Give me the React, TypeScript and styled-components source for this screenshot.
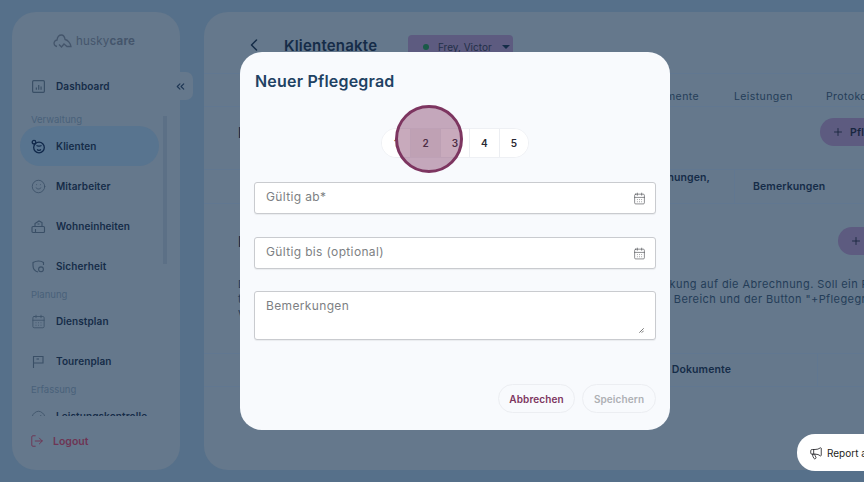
import React from 'react'
import styled, { createGlobalStyle } from 'styled-components'
import { ChevronLeft, ChevronsLeft, CalendarDays, LogOut, Plus, Megaphone, Gauge, Smile } from 'lucide-react'

const GlobalStyle = createGlobalStyle`
  html, body {
    margin: 0;
    height: 482px;
    overflow: hidden;
    background: #56708a;
    font-family: Inter, "Open Sans", sans-serif;
  }
`
const Page = styled.div`
  position: relative;
  display: flex;
  gap: 24px;
  height: 482px;
  box-sizing: border-box;
  padding: 12px 0 12px 12px;
  overflow: hidden;
`
const Sidebar = styled.aside`
  position: relative;
  flex: 0 0 168px;
  display: flex;
  flex-direction: column;
  background: #65788c;
  border-radius: 24px;
`
const Logo = styled.div`
  display: flex;
  align-items: center;
  justify-content: center;
  gap: 4px;
  height: 54px;
  box-sizing: border-box;
  padding: 4px 4px 0 0;
  color: #44556b;
  font-size: 11.5px;
  letter-spacing: 0.2px;
  b {
    font-weight: 700;
  }
`
const Collapse = styled.div`
  position: absolute;
  top: 60px;
  right: -13px;
  width: 25px;
  height: 28px;
  display: flex;
  align-items: center;
  justify-content: center;
  background: #65788c;
  border-radius: 0 7px 7px 0;
  color: #1c3553;
`
const Nav = styled.nav`
  flex: 1;
  height: 350px;
  overflow: hidden;
  padding-left: 8px;
`
const Group = styled.div<{ $h: number }>`
  height: ${(p) => p.$h}px;
  box-sizing: border-box;
  padding-left: 11px;
  display: flex;
  align-items: flex-end;
  font-size: 9.5px;
  line-height: 12px;
  color: #49617a;
`
const NavItem = styled.div<{ $active?: boolean }>`
  display: flex;
  align-items: center;
  gap: 10px;
  width: 139px;
  height: 40px;
  box-sizing: border-box;
  padding-left: 11px;
  border-radius: 20px;
  background: ${(p) => (p.$active ? '#58748f' : 'transparent')};
  color: ${(p) => (p.$active ? '#10284a' : '#3a4f66')};
  span {
    font-size: 10px;
    font-weight: 600;
    letter-spacing: 0.1px;
    color: #152c48;
    white-space: nowrap;
  }
`
const Scrollbar = styled.div`
  position: absolute;
  left: 151px;
  top: 104px;
  width: 4px;
  height: 148px;
  background: #5c7086;
`
const LogoutRow = styled.div`
  display: flex;
  align-items: center;
  gap: 9px;
  height: 54px;
  padding: 0 0 4px 18px;
  box-sizing: border-box;
  color: #6e3554;
  font-size: 10.5px;
  font-weight: 600;
`
const Main = styled.main`
  flex: 0 0 900px;
  background: #65788c;
  border-radius: 24px;
  color: #152c48;
  padding-top: 23px;
  box-sizing: border-box;
`
const Head = styled.div`
  display: flex;
  align-items: flex-start;
  height: 38px;
  padding-left: 40px;
  border-bottom: 1px solid #617790;
`
const Title = styled.h1`
  margin: 0 0 0 20px;
  font-size: 15px;
  line-height: 21px;
  font-weight: 600;
  letter-spacing: 0.2px;
  width: 124px;
`
const Patient = styled.div`
  display: flex;
  align-items: center;
  gap: 9px;
  width: 105px;
  height: 23px;
  box-sizing: border-box;
  padding-left: 15px;
  background: #5d5b80;
  border-radius: 4px;
  font-size: 10px;
  color: #222f48;
  i {
    width: 6px;
    height: 6px;
    border-radius: 50%;
    background: #1a5a48;
  }
  u {
    width: 0;
    height: 0;
    border: 4px solid transparent;
    border-top-color: #152c48;
    border-bottom: 0;
    margin-left: 1px;
  }
`
const Tabs = styled.div`
  display: grid;
  grid-template-columns: 530px 92px auto;
  height: 32px;
  align-items: end;
  border-bottom: 1px solid #617790;
  font-size: 10.5px;
  letter-spacing: 0.4px;
  color: #243d58;
`
const Tab = styled.div<{ $first?: boolean }>`
  white-space: nowrap;
  padding-bottom: 3px;
  padding-right: ${(p) => (p.$first ? '35px' : '0')};
  text-align: ${(p) => (p.$first ? 'right' : 'left')};
`
const SectionRow = styled.div<{ $left: number; $top: number }>`
  display: grid;
  grid-template-columns: ${(p) => p.$left}px auto;
  justify-content: start;
  align-items: center;
  margin-top: ${(p) => p.$top}px;
  padding-left: 34px;
  h2 {
    margin: 0;
    font-size: 14px;
    font-weight: 600;
  }
`
const AddButton = styled.div`
  display: flex;
  align-items: center;
  gap: 6px;
  height: 28px;
  padding: 0 12px;
  border-radius: 14px;
  background: #5d5b80;
  font-size: 10.5px;
  font-weight: 600;
  letter-spacing: 0.2px;
  color: #18263f;
`
const TableHead = styled.div<{ $cols: string; $top: number; $h: number }>`
  display: grid;
  grid-template-columns: ${(p) => p.$cols};
  align-items: center;
  height: ${(p) => p.$h}px;
  margin-top: ${(p) => p.$top}px;
  box-sizing: border-box;
  border-top: 1px solid #617790;
  border-bottom: 1px solid #617790;
  font-size: 10.5px;
  font-weight: 600;
  letter-spacing: 0.1px;
  color: #152c48;
`
const HeadCell = styled.div<{ $line?: boolean; $up?: boolean; $end?: number }>`
  height: 100%;
  display: flex;
  align-items: center;
  justify-content: ${(p) => (p.$end ? 'flex-end' : 'flex-start')};
  box-sizing: border-box;
  padding-left: 18px;
  padding-right: ${(p) => p.$end || 0}px;
  line-height: 13px;
  border-right: ${(p) => (p.$line ? '1px solid #617790' : 'none')};
  padding-bottom: ${(p) => (p.$up ? '18px' : '0')};
`
const Note = styled.p`
  margin: 22px 0 0 34px;
  font-size: 11px;
  line-height: 14.5px;
  letter-spacing: 0.4px;
  color: #243d58;
  white-space: nowrap;
`
const Modal = styled.section`
  position: absolute;
  left: 240px;
  top: 52px;
  width: 430px;
  height: 378px;
  box-sizing: border-box;
  padding: 0 14px;
  display: flex;
  flex-direction: column;
  background: #f8fafd;
  border-radius: 22px;
`
const ModalTitle = styled.h2`
  margin: 18px 0 0 1px;
  font-size: 16px;
  line-height: 22px;
  font-weight: 600;
  letter-spacing: 0.2px;
  color: #1f4263;
`
const Stepper = styled.div`
  align-self: center;
  display: flex;
  margin: 36px 0 24px 0;
  height: 30px;
  background: #fff;
  border: 1px solid #eef0f4;
  border-radius: 15px;
  overflow: hidden;
  box-sizing: border-box;
`
const Step = styled.div<{ $hover?: boolean }>`
  width: 28.4px;
  display: flex;
  align-items: center;
  justify-content: center;
  font-size: 10px;
  font-weight: 600;
  color: #2a2a33;
  background: ${(p) => (p.$hover ? '#f0f0f2' : '#fff')};
  & + & {
    border-left: 1px solid #eceef2;
  }
`
const Cursor = styled.div`
  position: absolute;
  left: 155px;
  top: 53px;
  width: 68px;
  height: 68px;
  box-sizing: border-box;
  border: 3px solid #7d3560;
  border-radius: 50%;
  background: rgba(125, 53, 96, 0.42);
`
const Field = styled.div<{ $h: number; $gap: number }>`
  position: relative;
  display: flex;
  justify-content: space-between;
  align-items: flex-start;
  height: ${(p) => p.$h}px;
  margin-bottom: ${(p) => p.$gap}px;
  box-sizing: border-box;
  padding: 6px 9px 0 11px;
  background: #fff;
  border: 1px solid #c9cbcf;
  border-radius: 3px;
  box-shadow: 0 1px 1px rgba(0, 0, 0, 0.06);
  font-size: 12px;
  line-height: 16px;
  letter-spacing: 0.35px;
  color: #7d7f83;
  svg {
    color: #505256;
    margin-top: 3px;
  }
`
const Grip = styled.svg`
  position: absolute;
  right: 11px;
  bottom: 6px;
`
const Actions = styled.div`
  margin-top: auto;
  margin-bottom: 17px;
  display: flex;
  justify-content: flex-end;
  gap: 7px;
`
const Pill = styled.div<{ $w: number; $off?: boolean }>`
  width: ${(p) => p.$w}px;
  height: 29px;
  box-sizing: border-box;
  display: flex;
  align-items: center;
  justify-content: center;
  border: 1px solid #eceef2;
  border-radius: 15px;
  font-size: 10px;
  font-weight: 600;
  letter-spacing: 0.1px;
  color: ${(p) => (p.$off ? '#aeb0b4' : '#7d3560')};
`
const Report = styled.div`
  position: absolute;
  left: 797px;
  top: 434px;
  width: 120px;
  height: 37px;
  display: flex;
  align-items: center;
  gap: 4px;
  box-sizing: border-box;
  padding-left: 12px;
  background: #fff;
  border-radius: 18px 0 0 18px;
  font-size: 10px;
  color: #1e1e22;
  white-space: nowrap;
`

const DashIcon = () => (
  <svg width="15" height="15" viewBox="0 0 14 14" fill="none" stroke="currentColor" strokeWidth="1.1">
    <rect x="1.5" y="1.5" width="11" height="11" rx="1" />
    <path d="M5 10V8M7.2 10V5.5M9.4 10V7" />
  </svg>
)
const KlientIcon = () => (
  <svg width="15" height="15" viewBox="0 0 15 15" fill="none" stroke="currentColor" strokeWidth="1.3">
    <circle cx="8" cy="8.5" r="5.3" />
    <circle cx="3" cy="3.2" r="1.8" />
    <path d="M5.5 6.5c1.500.8 3.500.8 5 0M6 10.500c1 .8 3 .8 4 0" />
  </svg>
)
const HouseIcon = () => (
  <svg width="15" height="15" viewBox="0 0 15 15" fill="none" stroke="currentColor" strokeWidth="1.1">
    <rect x="1" y="7.500" width="12.500" height="6" rx="1" />
    <path d="M4 7.500V4.500L8 2l3 1.500v4M6.500 5h2M4.500 13.500V10" />
  </svg>
)
const ShieldIcon = () => (
  <svg width="15" height="15" viewBox="0 0 15 15" fill="none" stroke="currentColor" strokeWidth="1.1">
    <path d="M7 13c-3-.8-5-3.500-5-6.500V3.500C4 2.500 6 2 7.500 2c2 0 3.800.6 5 1.500v2.500" />
    <circle cx="10" cy="10.300" r="2.400" />
  </svg>
)
const FlagIcon = () => (
  <svg width="15" height="15" viewBox="0 0 15 15" fill="none" stroke="currentColor" strokeWidth="1.1">
    <path d="M2.500 14V2.500h9.500v6.500H2.500" />
    <path d="M5.500 5h2.500" />
  </svg>
)
const LogoIcon = () => (
  <svg width="19" height="16" viewBox="0 0 19 16" fill="none" stroke="currentColor" strokeWidth="1.3">
    <path d="M4 13.500C1.500 13 .7 11 1.200 9.300 1.700 7.800 3 7 4 7c.4-3 2.500-5 4.500-5s3 1.500 3.600 4.500c2.500.5 5.400 3.500 5.900 7h-4L11 11l-2.500 3L6 11.500" />
  </svg>
)

export default function App() {
  return (
    <>
      <GlobalStyle />
      <Page>
        <Sidebar>
          <Logo>
            <LogoIcon />
            <div>
              husky<b>care</b>
            </div>
          </Logo>
          <Collapse>
            <ChevronsLeft size={13} />
          </Collapse>
          <Nav>
            <NavItem>
              <DashIcon />
              <span>Dashboard</span>
            </NavItem>
            <Group $h={20}>Verwaltung</Group>
            <NavItem $active>
              <KlientIcon />
              <span>Klienten</span>
            </NavItem>
            <NavItem>
              <Smile size={15} strokeWidth={1.3} />
              <span>Mitarbeiter</span>
            </NavItem>
            <NavItem>
              <HouseIcon />
              <span>Wohneinheiten</span>
            </NavItem>
            <NavItem>
              <ShieldIcon />
              <span>Sicherheit</span>
            </NavItem>
            <Group $h={15}>Planung</Group>
            <NavItem>
              <CalendarDays size={15} strokeWidth={1.2} />
              <span>Dienstplan</span>
            </NavItem>
            <NavItem>
              <FlagIcon />
              <span>Tourenplan</span>
            </NavItem>
            <Group $h={15}>Erfassung</Group>
            <NavItem>
              <Gauge size={15} strokeWidth={1.2} />
              <span>Leistungskontrolle</span>
            </NavItem>
          </Nav>
          <Scrollbar />
          <LogoutRow>
            <LogOut size={14} strokeWidth={1.6} />
            Logout
          </LogoutRow>
        </Sidebar>
        <Main>
          <Head>
            <ChevronLeft size={20} strokeWidth={1.8} />
            <Title>Klientenakte</Title>
            <Patient>
              <i />
              Frey, Victor
              <u />
            </Patient>
          </Head>
          <Tabs>
            <Tab $first>Dokumente</Tab>
            <Tab>Leistungen</Tab>
            <Tab>Protokolle</Tab>
          </Tabs>
          <SectionRow $left={582} $top={11}>
            <h2>Pflegegrade</h2>
            <AddButton>
              <Plus size={12} strokeWidth={1.8} />
              Pflegegrad
            </AddButton>
          </SectionRow>
          <TableHead $cols="531px 320px" $top={23} $h={35}>
            <HeadCell $line $up $end={24}>
              Rechnungen,
            </HeadCell>
            <HeadCell>Bemerkungen</HeadCell>
          </TableHead>
          <SectionRow $left={600} $top={23}>
            <h2>Pflegestufen</h2>
            <AddButton>
              <Plus size={12} strokeWidth={1.8} />
              Pflegegrad
            </AddButton>
          </SectionRow>
          <Note>
            Der Pflegegrad eines Klienten hat, je nach Kostenträgern, eine direkte Auswirkung auf die Abrechnung. Soll ein Pflegegrad
            <br />
            trotzdem nicht berücksichtigt werden, so erscheint hierfür ständig im unteren Bereich und der Button "+Pflegegrad"
            <br />
            verwendet.
          </Note>
          <TableHead $cols="614px 286px" $top={32} $h={34}>
            <HeadCell $line $end={86}>
              Dokumente
            </HeadCell>
            <HeadCell />
          </TableHead>
        </Main>
        <Modal>
          <ModalTitle>Neuer Pflegegrad</ModalTitle>
          <Stepper>
            <Step>1</Step>
            <Step $hover>2</Step>
            <Step>3</Step>
            <Step>4</Step>
            <Step>5</Step>
          </Stepper>
          <Field $h={32} $gap={23}>
            Gültig ab*
            <CalendarDays size={13} strokeWidth={1.2} />
          </Field>
          <Field $h={32} $gap={22}>
            Gültig bis (optional)
            <CalendarDays size={13} strokeWidth={1.2} />
          </Field>
          <Field $h={49} $gap={0}>
            Bemerkungen
            <Grip width="5" height="5" viewBox="0 0 5 5" stroke="#555" strokeWidth="0.8">
              <path d="M0.300 4.700L4.700 0.300M2.700 4.700L4.700 2.700" />
            </Grip>
          </Field>
          <Actions>
            <Pill $w={77}>Abbrechen</Pill>
            <Pill $w={74} $off>
              Speichern
            </Pill>
          </Actions>
          <Cursor />
        </Modal>
        <Report>
          <Megaphone size={14} strokeWidth={1.4} />
          Report a Bug
        </Report>
      </Page>
    </>
  )
}
